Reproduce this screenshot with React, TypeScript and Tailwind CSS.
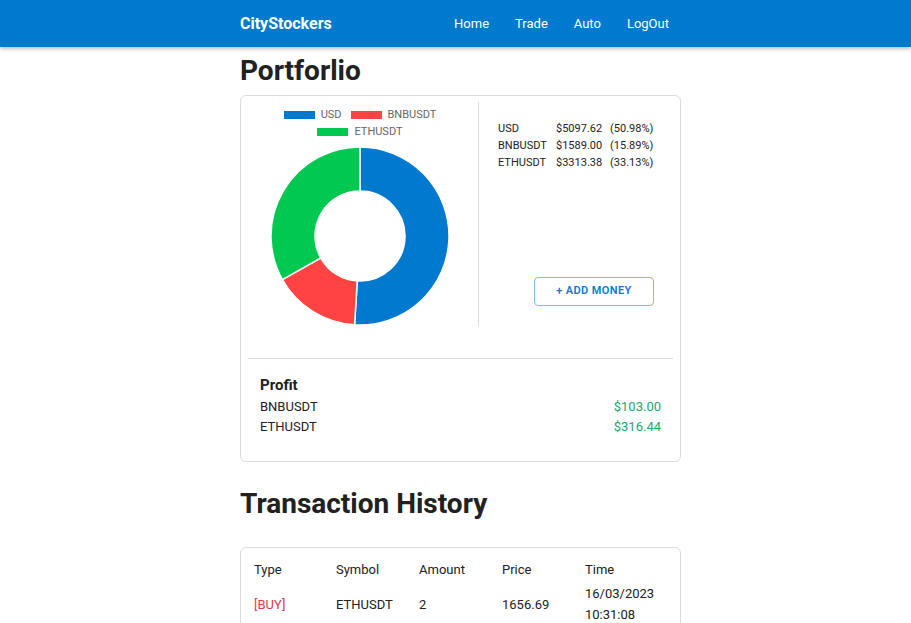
import React from 'react';

const slices = [
  { label: 'USD', value: 5097.62, pct: '50.98%', color: '#0079cf' },
  { label: 'BNBUSDT', value: 1589.0, pct: '15.89%', color: '#ff4242' },
  { label: 'ETHUSDT', value: 3313.38, pct: '33.13%', color: '#00c850' },
];

const arc = (cx: number, cy: number, r: number, R: number, a0: number, a1: number) => {
  const p = (rad: number, a: number) => [cx + rad * Math.cos(a), cy + rad * Math.sin(a)];
  const large = a1 - a0 > Math.PI ? 1 : 0;
  const [x0, y0] = p(R, a0);
  const [x1, y1] = p(R, a1);
  const [x2, y2] = p(r, a1);
  const [x3, y3] = p(r, a0);
  return `M${x0} ${y0} A${R} ${R} 0 ${large} 1 ${x1} ${y1} L${x2} ${y2} A${r} ${r} 0 ${large} 0 ${x3} ${y3} Z`;
};

const Donut = () => {
  const total = slices.reduce((s, x) => s + x.value, 0);
  let a = -Math.PI / 2;
  return (
    <svg width="224" height="186" viewBox="0 0 224 186">
      {slices.map((s) => {
        const a0 = a;
        const a1 = a + (s.value / total) * Math.PI * 2;
        a = a1;
        return <path key={s.label} d={arc(112, 96, 45, 89, a0, a1)} fill={s.color} stroke="#fff" strokeWidth="1.5" />;
      })}
    </svg>
  );
};

const LegendItem = ({ label, color }: { label: string; color: string }) => (
  <div className="flex items-center gap-[6px]">
    <span className="inline-block h-[8px] w-[31px]" style={{ backgroundColor: color }} />
    <span>{label}</span>
  </div>
);

const App = () => {
  return (
    <div className="min-h-screen bg-white text-[#212121]" style={{ fontFamily: 'Roboto, "Liberation Sans", sans-serif' }}>
      <nav className="h-[47px] bg-[#007acc] shadow-[0_2px_4px_rgba(0,0,0,0.25)]">
        <div className="pl-[10px] h-full">
          <div className="mx-auto flex h-full w-[441px] items-center justify-between">
            <span className="text-[16px] font-bold text-white">CityStockers</span>
            <div className="flex text-[13px] text-white">
              <span className="px-[13px]">Home</span>
              <span className="px-[13px]">Trade</span>
              <span className="px-[13px]">Auto</span>
              <span className="pl-[13px] pr-[12px]">LogOut</span>
            </div>
          </div>
        </div>
      </nav>

      <div className="pl-[10px]">
        <div className="mx-auto w-[441px]">
          <h1 className="mt-[7px] text-[28px] font-bold leading-[34px]">Portforlio</h1>

          <div className="mt-[7px] rounded-[6px] border border-[#dcdcdc] px-[7px] pt-[6px]">
            <div className="flex">
              <div className="w-[230px] pr-[6px]">
                <div className="flex flex-col items-center pt-[4px] text-[11px] leading-[17px] text-[#666]">
                  <div className="flex gap-[9px]">
                    <LegendItem label="USD" color="#0079cf" />
                    <LegendItem label="BNBUSDT" color="#ff4242" />
                  </div>
                  <LegendItem label="ETHUSDT" color="#00c850" />
                </div>
                <Donut />
              </div>
              <div className="flex flex-1 flex-col border-l border-[#dcdcdc] px-[19px] pt-[18px] pb-[20px]">
                <table className="text-[11px] leading-[17px] text-[#222]">
                  <tbody>
                    {slices.map((s) => (
                      <tr key={s.label}>
                        <td className="w-[58px]">{s.label}</td>
                        <td className="w-[54px]">${s.value.toFixed(2)}</td>
                        <td>({s.pct})</td>
                      </tr>
                    ))}
                  </tbody>
                </table>
                <div className="mt-auto flex justify-end">
                  <button className="h-[29px] w-[120px] rounded-[4px] border border-[#7fbbea] text-[11px] font-semibold tracking-[0.4px] text-[#0a7bd0]">
                    + ADD MONEY
                  </button>
                </div>
              </div>
            </div>

            <div className="mt-[32px] border-t border-[#dcdcdc] px-[12px] pt-[16px] pb-[24px]">
              <h2 className="text-[15px] font-bold leading-[20px]">Profit</h2>
              <div className="mt-[2px] text-[13px] leading-[20px]">
                <div className="flex justify-between">
                  <span>BNBUSDT</span>
                  <span className="text-[#17a96f]">$103.00</span>
                </div>
                <div className="flex justify-between">
                  <span>ETHUSDT</span>
                  <span className="text-[#17a96f]">$316.44</span>
                </div>
              </div>
            </div>
          </div>

          <h1 className="mt-[25px] text-[28px] font-bold leading-[34px]">Transaction History</h1>

          <div className="mt-[26px] rounded-[6px] border border-[#dcdcdc] px-[13px] pt-[11px] pb-[14px]">
            <table className="w-full text-[13px] leading-[21px]">
              <thead>
                <tr className="text-left">
                  <th className="w-[82px] pb-[3px] font-normal">Type</th>
                  <th className="w-[83px] pb-[3px] font-normal">Symbol</th>
                  <th className="w-[83px] pb-[3px] font-normal">Amount</th>
                  <th className="w-[83px] pb-[3px] font-normal">Price</th>
                  <th className="pb-[3px] font-normal">Time</th>
                </tr>
              </thead>
              <tbody>
                <tr>
                  <td className="text-[#d93c4f]">[BUY]</td>
                  <td>ETHUSDT</td>
                  <td>2</td>
                  <td>1656.69</td>
                  <td>
                    16/03/2023
                    <br />
                    10:31:08
                  </td>
                </tr>
                <tr>
                  <td className="text-[#17a96f]">[SELL]</td>
                  <td>BNBUSDT</td>
                  <td>3</td>
                  <td>331.20</td>
                  <td>
                    15/03/2023
                    <br />
                    18:02:44
                  </td>
                </tr>
              </tbody>
            </table>
          </div>
        </div>
      </div>
    </div>
  );
};

export default App;
